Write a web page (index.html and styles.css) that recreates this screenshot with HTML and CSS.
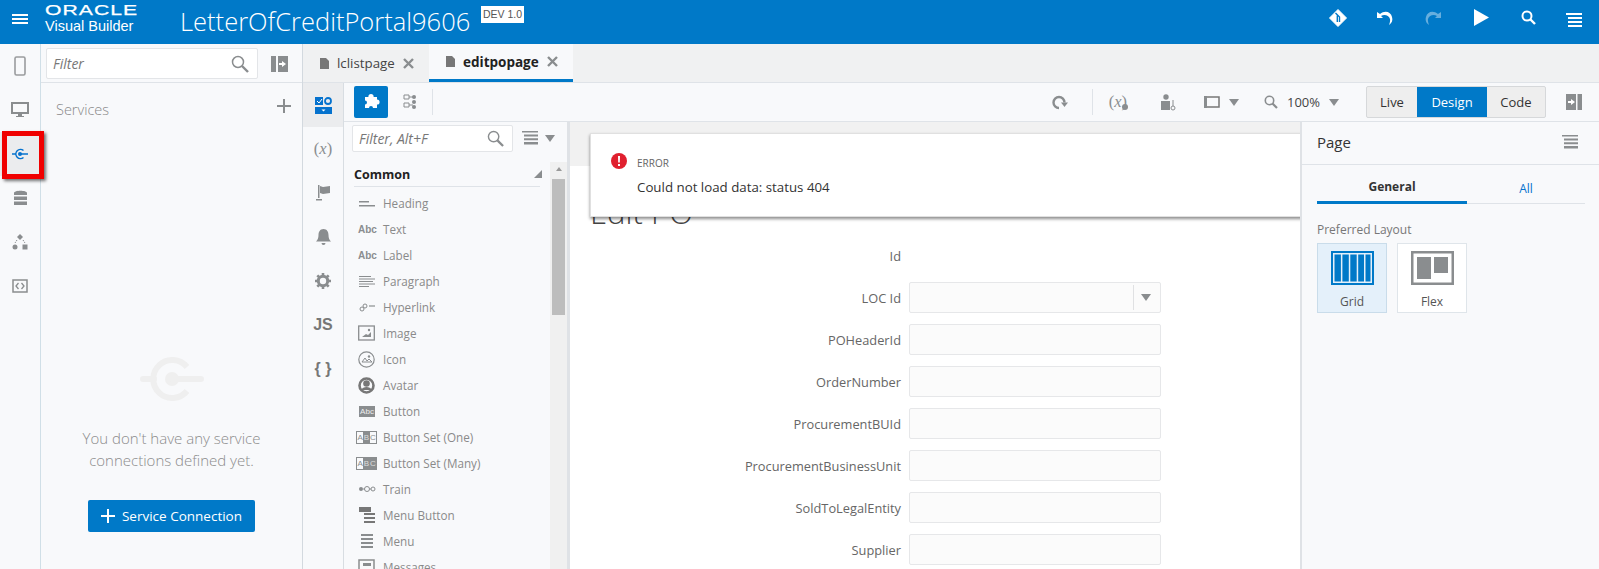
FILE: index.html
```html
<!DOCTYPE html>
<html lang="en">
<head>
<meta charset="utf-8">
<title>Visual Builder</title>
<link rel="stylesheet" href="styles.css">
</head>
<body>
<header class="topbar">
  <svg class="burger" width="16" height="10" viewBox="0 0 16 10"><path d="M0 0h16v2H0zM0 4h16v2H0zM0 8h16v2H0z" fill="#fff"/></svg>
  <div class="brand"><span class="oracle">ORACLE</span><span class="vb">Visual Builder</span></div>
  <div class="apptitle">LetterOfCreditPortal9606</div>
  <div class="badge">DEV 1.0</div>
  <div class="top-actions">
    <svg width="18" height="18" viewBox="0 0 18 18"><path d="M9 .5l8.500 8.500L9 17.500.5 9z" fill="#fff" stroke="#fff" stroke-linejoin="round"/><path d="M6.500 4l4 4v5M8.300 6.500V13" stroke="#0079c8" stroke-width="1.400" fill="none"/></svg>
    <svg width="18" height="18" viewBox="0 0 18 18"><path d="M1 3v6h6L5 7c3-2 8-1 9 3 .4 2-.2 4-1 6 3-2 4-5 3-8C15 3 9 1 4 5z" fill="#fff"/></svg>
    <svg class="faded" width="18" height="18" viewBox="0 0 18 18"><path d="M17 3v6h-6l2-2c-3-2-8-1-9 3-.4 2 .2 4 1 6-3-2-4-5-3-8C3 3 9 1 14 5z" fill="#fff"/></svg>
    <svg width="15" height="17" viewBox="0 0 15 17"><path d="M0 0l15 8.500L0 17z" fill="#fff"/></svg>
    <svg width="15" height="15" viewBox="0 0 15 15"><circle cx="6" cy="6" r="4.500" stroke="#fff" stroke-width="2" fill="none"/><path d="M9.500 9.500l4.500 4.500" stroke="#fff" stroke-width="2.400"/></svg>
    <svg width="16" height="14" viewBox="0 0 16 14"><path d="M0 0h16v2H0zM2 4h14v2H2zM2 8h14v2H2zM2 12h14v2H2z" fill="#fff"/></svg>
  </div>
</header>

<div class="shell">
  <nav class="rail">
    <div class="rail-item"><svg width="14" height="20" viewBox="0 0 14 20"><rect x="2" y="1" width="10" height="18" rx="1.500" fill="none" stroke="#9a9c9e" stroke-width="1.600"/></svg></div>
    <div class="rail-item"><svg width="18" height="16" viewBox="0 0 18 16"><path d="M1 1h16v10H1z" fill="none" stroke="#8a8d8f" stroke-width="2"/><path d="M7 12h4v2h2v1H5v-1h2z" fill="#8a8d8f"/></svg></div>
    <div class="rail-item active">
      <svg width="16" height="12" viewBox="0 0 16 12"><path d="M11.500 2.500A4.600 4.600 0 1 0 11.500 9.500" fill="none" stroke="#0572ce" stroke-width="1.500"/><circle cx="8" cy="6" r="2" fill="#0572ce"/><path d="M0 6h4M8 6h8" stroke="#0572ce" stroke-width="1.300"/></svg>
      <div class="callout"></div>
    </div>
    <div class="rail-item"><svg width="15" height="16" viewBox="0 0 15 16"><path d="M1 3c0-3 13-3 13 0v2H1zM1 6.500h13v3.500H1zM1 11.500h13V15H1z" fill="#8a8d8f"/></svg></div>
    <div class="rail-item"><svg width="16" height="16" viewBox="0 0 16 16"><path d="M8 0l3 3-3 3-3-3z" fill="#8a8d8f"/><circle cx="3" cy="13" r="2.500" fill="#8a8d8f"/><rect x="10.500" y="10.500" width="5" height="5" fill="#8a8d8f"/><path d="M5 6l-2 3M11 6l2 3" stroke="#8a8d8f" stroke-dasharray="1.500 1"/></svg></div>
    <div class="rail-item"><svg width="16" height="14" viewBox="0 0 16 14"><rect x="1" y="1" width="14" height="12" fill="none" stroke="#8a8d8f" stroke-width="1.500"/><path d="M6.500 4L4 7l2.500 3M9.500 4L12 7l-2.500 3" fill="none" stroke="#8a8d8f" stroke-width="1.300"/></svg></div>
  </nav>

  <aside class="services">
    <div class="svc-top">
      <div class="filter filter-wide"><span>Filter</span><svg class="lens" width="18" height="18" viewBox="0 0 18 18"><circle cx="7" cy="7" r="5.500" fill="none" stroke="#8a8d8f" stroke-width="1.500"/><path d="M11 11l6 6" stroke="#8a8d8f" stroke-width="2.400"/></svg></div>
      <svg width="17" height="16" viewBox="0 0 17 16"><path d="M0 0h5v16H0zM7 0h10v16H7z" fill="#8a8d8f"/><path d="M15 8l-4-3v2H8v2h3v2z" fill="#fff"/></svg>
    </div>
    <div class="svc-head"><span>Services</span><svg class="svc-plus" width="14" height="14" viewBox="0 0 14 14"><path d="M6 0h2v6h6v2H8v6H6V8H0V6h6z" fill="#8a8d8f"/></svg></div>
    <div class="svc-empty">
      <svg class="svc-ghost" width="64" height="44" viewBox="0 0 64 44"><path d="M47 10A19 19 0 1 0 47 34" fill="none" stroke="#efefef" stroke-width="6"/><circle cx="32" cy="22" r="7" fill="#efefef"/><path d="M3 22h11M32 22h29" stroke="#efefef" stroke-width="6" stroke-linecap="round"/></svg>
      <p class="svc-msg">You don't have any service<br>connections defined yet.</p>
      <button class="primary"><svg width="14" height="14" viewBox="0 0 14 14"><path d="M6 0h2v6h6v2H8v6H6V8H0V6h6z" fill="#fff"/></svg>Service Connection</button>
    </div>
  </aside>

  <main class="workspace">
    <div class="tabs">
      <div class="tab"><svg width="9" height="11" viewBox="0 0 9 11"><path d="M0 0h6l3 3v8H0z" fill="#777"/></svg><span>lclistpage</span><svg class="x" width="11" height="11" viewBox="0 0 11 11"><path d="M1 1l9 9M10 1l-9 9" stroke="#8a8d8f" stroke-width="2.400"/></svg></div>
      <div class="tab tab-on"><svg width="9" height="11" viewBox="0 0 9 11"><path d="M0 0h6l3 3v8H0z" fill="#777"/></svg><span>editpopage</span><svg class="x" width="11" height="11" viewBox="0 0 11 11"><path d="M1 1l9 9M10 1l-9 9" stroke="#8a8d8f" stroke-width="2.400"/></svg></div>
    </div>
    <div class="editor">
      <div class="iconrail">
        <div class="ir-item ir-on"><svg width="17" height="17" viewBox="0 0 17 17"><path d="M0 0h8v8H0zM0 10h17v7H0z" fill="#0572ce"/><circle cx="13" cy="4" r="3" fill="none" stroke="#0572ce" stroke-width="1.800"/><path d="M2 4l2 2 3-4" stroke="#fff" fill="none"/><path d="M6.500 12.500h4l-2 2z" fill="#fff"/></svg></div>
        <div class="ir-item xvar">(<i>x</i>)</div>
        <div class="ir-item"><svg width="14" height="16" viewBox="0 0 14 16"><path d="M2 0h1.500v13H2zM4 1l3 1 7-1v7l-7 1-3-1zM0 14h6v1.500H0z" fill="#8a8d8f"/></svg></div>
        <div class="ir-item"><svg width="15" height="16" viewBox="0 0 15 16"><path d="M7.500 0c3.500 0 5 3 5 6 0 3 .8 5 2.500 6.500H0C1.700 11 2.500 9 2.500 6c0-3 1.500-6 5-6zM5.500 14h4a2 2 0 0 1-4 0z" fill="#8a8d8f"/></svg></div>
        <div class="ir-item"><svg width="16" height="16" viewBox="0 0 16 16"><circle cx="8" cy="8" r="4.700" fill="none" stroke="#8a8d8f" stroke-width="3"/><path d="M8 0v3M8 13v3M0 8h3M13 8h3M2.300 2.300l2.200 2.200M11.500 11.500l2.200 2.200M13.700 2.300l-2.200 2.200M4.500 11.500l-2.200 2.200" stroke="#8a8d8f" stroke-width="2.600"/></svg></div>
        <div class="ir-item jsmark">JS</div>
        <div class="ir-item braces">{ }</div>
      </div>
      <div class="design">
        <div class="toolbar">
          <div class="tb-left">
            <div class="puzzle"><svg width="17" height="16" viewBox="0 0 17 16"><rect x="2" y="3" width="12" height="11" fill="#fff"/><circle cx="8" cy="2.600" r="2.600" fill="#fff"/><circle cx="14" cy="8" r="2.600" fill="#fff"/><circle cx="2" cy="8.500" r="2" fill="#0079c8"/><circle cx="8" cy="14" r="2" fill="#0079c8"/></svg></div>
            <svg class="struct" width="14" height="16" viewBox="0 0 14 16"><path d="M1 1h5v4H1zM1 9h5v4H1z" fill="none" stroke="#8a8d8f"/><circle cx="11" cy="3" r="2" fill="#8a8d8f"/><circle cx="11" cy="8" r="2" fill="#8a8d8f"/><circle cx="11" cy="13" r="2" fill="#8a8d8f"/><path d="M6 3h4M6 11h4" stroke="#8a8d8f"/></svg>
            <span class="vsep"></span>
          </div>
          <div class="tb-right">
            <svg class="t-refresh" width="17" height="15" viewBox="0 0 17 15"><path d="M8 13A5.500 5.500 0 1 1 13.500 7.500" fill="none" stroke="#8a8d8f" stroke-width="2.400"/><path d="M10 7.500h7L13.500 12z" fill="#8a8d8f"/></svg>
            <span class="vsep t-sep"></span>
            <span class="xvar t-x">(<i>x</i>)<i class="x-dot"></i></span>
            <svg class="t-person" width="15" height="17" viewBox="0 0 15 17"><circle cx="5" cy="3" r="2.700" fill="#8a8d8f"/><path d="M0 7h9v9H0z" fill="#8a8d8f"/><circle cx="12" cy="14" r="2" fill="none" stroke="#8a8d8f"/><path d="M12 6v6" stroke="#8a8d8f"/></svg>
            <svg class="t-frame" width="16" height="12" viewBox="0 0 16 12"><path d="M1 1h14v10H1z" fill="none" stroke="#777" stroke-width="1.500"/><path d="M0 0h3v12H0z" fill="#8a8d8f"/></svg>
            <span class="caret t-car1"></span>
            <svg class="t-lens" width="14" height="14" viewBox="0 0 14 14"><circle cx="5.500" cy="5.500" r="4.200" fill="none" stroke="#8a8d8f" stroke-width="1.600"/><path d="M8.500 8.500L13 13" stroke="#8a8d8f" stroke-width="2.200"/></svg>
            <span class="zoomtxt">100%</span>
            <span class="caret t-car2"></span>
            <div class="seg"><span class="s-live">Live</span><span class="s-design">Design</span><span class="s-code">Code</span></div>
            <svg class="t-coll" width="16" height="16" viewBox="0 0 16 16"><path d="M0 0h10v16H0zM11.500 0H16v16h-4.500z" fill="#8a8d8f"/><path d="M9 8L5 5v2H2v2h3v2z" fill="#fff"/></svg>
          </div>
        </div>
        <div class="design-body">
          <section class="palette">
            <div class="pal-top">
              <div class="filter filter-pal"><span>Filter, Alt+F</span><svg class="lens" width="17" height="17" viewBox="0 0 18 18"><circle cx="7" cy="7" r="5.500" fill="none" stroke="#8a8d8f" stroke-width="1.500"/><path d="M11 11l6 6" stroke="#8a8d8f" stroke-width="2.400"/></svg></div>
              <svg width="16" height="15" viewBox="0 0 16 15"><path d="M0 0h16v1.500H0zM2 3.400h14v2H2zM2 7.200h14v2H2zM2 11h14v2.500H2z" fill="#8a8d8f"/></svg>
              <span class="caret"></span>
            </div>
            <div class="pal-body">
              <div class="pal-list">
                <div class="pal-cat"><span>Common</span><i class="cat-tri"></i></div>
                <div class="pi"><svg class="pic" width="18" height="16" viewBox="0 0 18 16"><path d="M1 6h10v1.500H1zM1 10h16v1.500H1z" fill="#8a8d8f"/></svg>Heading</div>
                <div class="pi"><span class="pic abc">Abc</span>Text</div>
                <div class="pi"><span class="pic abc">Abc</span>Label</div>
                <div class="pi"><svg class="pic" width="18" height="16" viewBox="0 0 18 16"><path d="M1 3h12v1H1zM1 5.500h16v1H1zM1 8h14v1H1zM1 10.500h16v1H1zM1 13h10v1H1z" fill="#8a8d8f"/></svg>Paragraph</div>
                <div class="pi"><svg class="pic" width="18" height="16" viewBox="0 0 18 16"><circle cx="4" cy="10" r="2" fill="none" stroke="#8a8d8f"/><circle cx="7" cy="7" r="2" fill="none" stroke="#8a8d8f"/><path d="M11 7h6" stroke="#8a8d8f" stroke-width="1.200"/></svg>Hyperlink</div>
                <div class="pi"><svg class="pic" width="18" height="16" viewBox="0 0 18 16"><rect x=".7" y="1" width="15.600" height="14" fill="none" stroke="#8a8d8f" stroke-width="1.300"/><path d="M4 12l4-3 2 1 3-3v5z" fill="#8a8d8f"/><circle cx="11" cy="5" r="1.200" fill="#8a8d8f"/></svg>Image</div>
                <div class="pi"><svg class="pic" width="18" height="17" viewBox="0 0 18 17"><circle cx="8.500" cy="8.500" r="7.700" fill="none" stroke="#8a8d8f" stroke-width="1.200"/><path d="M4 11l3-4 2 3 2-2 3 3z" fill="none" stroke="#8a8d8f"/><circle cx="11" cy="5.500" r="1.200" fill="#8a8d8f"/></svg>Icon</div>
                <div class="pi"><svg class="pic" width="18" height="17" viewBox="0 0 18 17"><circle cx="8.500" cy="8.500" r="7" fill="none" stroke="#777" stroke-width="2.600"/><circle cx="8.500" cy="6.500" r="3.300" fill="#777"/><path d="M3 13c2-4 9-4 11 0z" fill="#777"/></svg>Avatar</div>
                <div class="pi"><span class="pic abtn">Abc</span>Button</div>
                <div class="pi"><span class="pic abcset"><b>A</b><b class="on">B</b><b>C</b></span>Button Set (One)</div>
                <div class="pi"><span class="pic abcset"><b>A</b><b class="on">B</b><b class="on">C</b></span>Button Set (Many)</div>
                <div class="pi"><svg class="pic" width="18" height="16" viewBox="0 0 18 16"><circle cx="3" cy="8" r="2" fill="#8a8d8f"/><circle cx="9" cy="8" r="2.500" fill="none" stroke="#8a8d8f"/><circle cx="15" cy="8" r="2" fill="none" stroke="#8a8d8f"/><path d="M5 8h2M11.500 8H13" stroke="#8a8d8f"/></svg>Train</div>
                <div class="pi"><svg class="pic" width="18" height="17" viewBox="0 0 18 17"><path d="M1 0h12v5H1zM6 6h11v2H6zM6 10h11v2H6zM6 14h11v2H6z" fill="#777"/></svg>Menu Button</div>
                <div class="pi"><svg class="pic" width="18" height="16" viewBox="0 0 18 16"><path d="M3 1h12v2H3zM3 5h12v2H3zM3 9h12v2H3zM3 13h12v2H3z" fill="#8a8d8f"/></svg>Menu</div>
                <div class="pi"><svg class="pic" width="18" height="16" viewBox="0 0 18 16"><path d="M1 1h15v14H1z" fill="none" stroke="#8a8d8f" stroke-width="1.500"/><path d="M5 4h8v3H5z" fill="#8a8d8f"/></svg>Messages</div>
              </div>
              <div class="scroll"><i class="sc-up"></i><i class="sc-thumb"></i></div>
            </div>
          </section>

          <section class="canvas">
            <div class="canvas-strip"></div>
            <h1 class="pagehead">Edit PO</h1>
            <div class="form">
              <label>Id</label><div></div>
              <label>LOC Id</label><div class="inp sel"><i class="sel-sep"></i><span class="caret"></span></div>
              <label>POHeaderId</label><div class="inp"></div>
              <label>OrderNumber</label><div class="inp"></div>
              <label>ProcurementBUId</label><div class="inp"></div>
              <label>ProcurementBusinessUnit</label><div class="inp"></div>
              <label>SoldToLegalEntity</label><div class="inp"></div>
              <label>Supplier</label><div class="inp"></div>
            </div>
            <div class="toast">
              <svg class="toast-ic" width="16" height="16" viewBox="0 0 16 16"><circle cx="8" cy="8" r="8" fill="#e0202f"/><path d="M7 3h2l-.2 6.500H7.200zM7 11h2v2H7z" fill="#fff"/></svg>
              <div class="toast-txt"><div class="toast-t">ERROR</div><div class="toast-m">Could not load data: status 404</div></div>
            </div>
          </section>

          <aside class="props">
            <div class="props-head"><span>Page</span><svg width="16" height="15" viewBox="0 0 16 15"><path d="M0 0h16v1.500H0zM2 3.400h14v2H2zM2 7.200h14v2H2zM2 11h14v2.500H2z" fill="#8a8d8f"/></svg></div>
            <div class="props-body">
              <div class="ptabs"><span class="pt-on">General</span><span class="pt">All</span></div>
              <div class="pl-label">Preferred Layout</div>
              <div class="cards">
                <div class="card card-on"><svg width="43" height="34" viewBox="0 0 43 34"><path d="M0 0h43v34H0z" fill="#0079c8"/><path d="M2 2h39v30H2z" fill="#e4f0fa"/><path d="M3.500 3.500h6.400v27H3.500zM11.400 3.500h6.400v27h-6.400zM19.300 3.500h6.400v27h-6.400zM27.200 3.500h5.800v27h-5.800zM34.500 3.500h5v27h-5z" fill="#0079c8"/></svg><span>Grid</span></div>
                <div class="card"><svg width="43" height="34" viewBox="0 0 43 34"><path d="M0 0h43v34H0z" fill="#8a8d8f"/><path d="M2.500 2.500h38v29h-38z" fill="#fff"/><path d="M6 6h14v22H6zM23 6h14v16H23z" fill="#8a8d8f"/></svg><span>Flex</span></div>
              </div>
            </div>
          </aside>
        </div>
      </div>
    </div>
  </main>
</div>
</body>
</html>
```

FILE: styles.css
```css
* { box-sizing: border-box; }
html, body { margin: 0; height: 569px; overflow: hidden; }
body { font-family: "Open Sans", "Liberation Sans", sans-serif; font-size: 12.5px; color: #333; background: #f8f9fb; }
svg { display: block; flex: none; }

.topbar { height: 44px; background: #0079c8; display: flex; align-items: center; color: #fff; }
.burger { margin-left: 12px; margin-bottom: 7px; }
.brand { align-self: flex-start; margin-top: 3px; margin-left: 17px; display: flex; flex-direction: column; width: 135px; font-family: "Liberation Sans", sans-serif; }
.oracle { font-size: 14.5px; line-height: 15px; font-weight: 400; letter-spacing: .7px; transform: scaleX(1.46); transform-origin: left; -webkit-text-stroke: .25px #fff; }
.vb { font-size: 14.500px; line-height: 16px; margin-top: 0; }
.apptitle { font-size: 25.5px; font-weight: 300; line-height: 40px; margin-bottom: 2px; width: 301px; }
.badge { align-self: flex-start; margin-top: 6px; background: #fff; color: #555; font-size: 10.500px; line-height: 17px; height: 17px; width: 43px; text-align: center; font-family: "Liberation Sans", sans-serif; }
.top-actions { margin-left: auto; display: flex; align-items: center; padding-bottom: 9px; }
.top-actions svg { margin-right: 30px; }
.top-actions svg:nth-child(1) { margin-right: 29px; }
.top-actions svg:nth-child(3) { margin-right: 32px; }
.top-actions svg:nth-child(4) { margin-right: 32px; }
.top-actions svg:last-child { margin-right: 17px; margin-top: 4px; }
.faded { opacity: .4; }

.shell { display: flex; height: 525px; }
.rail { width: 41px; border-right: 1px solid #d0dfe7; flex: none; }
.rail-item { height: 44px; display: flex; align-items: center; justify-content: center; position: relative; }
.rail-item.active { background: #ebecee; }
.callout { position: absolute; left: 2px; top: -1px; width: 42px; height: 48px; border: 5px solid #f00000; box-shadow: 2px 2px 3px rgba(0,0,0,.55); }

.services { width: 262px; flex: none; border-right: 1px solid #d3d9df; display: flex; flex-direction: column; }
.svc-top { height: 39px; display: flex; align-items: center; gap: 13px; padding: 1px 0 0 5px; border-bottom: 1px solid #dfe3e8; }
.filter { background: #fff; border: 1px solid #e3e5e8; border-radius: 2px; display: flex; align-items: center; justify-content: space-between; padding: 0 8px 0 6px; font-style: italic; color: #777; font-size: 14px; }
.filter-wide { width: 212px; height: 31px; }
.filter-pal { width: 161px; height: 27px; }
.svc-head { height: 52px; display: flex; align-items: center; justify-content: space-between; padding: 0 11px 0 15px; font-size: 14.500px; font-weight: 300; color: #888; }
.svc-plus { margin-bottom: 6px; }
.svc-empty { display: flex; flex-direction: column; align-items: center; padding-top: 222px; }
.svc-msg { margin: 27px 0 0; text-align: center; font-size: 15px; line-height: 21.500px; font-weight: 300; color: #8c8c8c; }
.primary { margin-top: 29px; height: 32px; width: 167px; background: #0079c8; border: 0; border-radius: 2px; color: #fff; font: 13.500px "Open Sans", sans-serif; display: flex; align-items: center; justify-content: center; gap: 7px; }

.workspace { flex: 1; min-width: 0; display: flex; flex-direction: column; }
.tabs { height: 39px; background: #f0f1f2; display: flex; border-bottom: 1px solid #dfe3e8; padding-left: 17px; flex: none; }
.tab { height: 38px; display: flex; align-items: center; gap: 8px; font-size: 13.300px; color: #444; }
.tab:first-child { width: 109px; }
.tab-on { width: 144px; background: #f8f9fb; padding-left: 17px; border-bottom: 3px solid #0079c8; font-weight: 700; color: #222; font-size: 13.500px; }

.editor { flex: 1; display: flex; min-height: 0; }
.iconrail { width: 41px; flex: none; border-right: 1px solid #d8dde2; }
.ir-item { height: 44px; display: flex; align-items: center; justify-content: center; }
.ir-on { background: #ebecee; }
.xvar { font-family: "Liberation Serif", serif; font-size: 16.500px; color: #8a8d8f; }
.jsmark { font-family: "Liberation Sans", sans-serif; font-weight: 700; font-size: 16px; color: #777; }
.braces { font-family: "Liberation Sans", sans-serif; font-weight: 700; font-size: 16px; color: #777; }

.design { flex: 1; min-width: 0; display: flex; flex-direction: column; }
.toolbar { height: 39px; flex: none; display: flex; justify-content: space-between; align-items: center; border-bottom: 1px solid #dfe3e8; }
.tb-left { display: flex; align-items: center; padding-left: 10px; }
.puzzle { width: 34px; height: 32px; background: #0079c8; border-radius: 2px; display: flex; align-items: center; justify-content: center; }
.struct { margin-left: 15px; }
.vsep { width: 1px; height: 26px; background: #dfe3e8; margin-left: 15px; }
.tb-right { display: flex; align-items: center; padding-right: 17px; }
.t-sep { margin-left: 24px; }
.t-x { margin-left: 16px; position: relative; }
.x-dot { position: absolute; right: -1px; bottom: 2px; width: 6px; height: 6px; border-radius: 50%; background: #8a8d8f; }
.t-person { margin-left: 34px; }
.t-frame { margin-left: 28px; }
.t-car1 { margin-left: 9px; }
.t-lens { margin-left: 25px; }
.zoomtxt { margin-left: 9px; font-size: 13px; color: #444; }
.t-car2 { margin-left: 9px; }
.seg { margin-left: 27px; display: flex; height: 32px; border: 1px solid #d6d8da; border-radius: 2px; background: #eeeeee; font-size: 13px; color: #333; }
.seg span { display: flex; align-items: center; justify-content: center; }
.s-live { width: 50px; }
.s-design { width: 70px; background: #0079c8; color: #fff; }
.s-code { width: 58px; }
.t-coll { margin-left: 20px; }
.caret { display: block; flex: none; width: 0; height: 0; border-left: 5px solid transparent; border-right: 5px solid transparent; border-top: 7px solid #8a8d8f; }

.design-body { flex: 1; display: flex; min-height: 0; }
.palette { width: 226px; flex: none; border-right: 3px solid #dfe2e6; display: flex; flex-direction: column; }
.pal-top { height: 40px; display: flex; align-items: center; padding: 0 0 7px 8px; flex: none; }
.pal-top > svg { margin-left: 9px; }
.pal-top .caret { margin-left: 7px; }
.pal-body { flex: 1; display: flex; min-height: 0; }
.pal-list { width: 206px; flex: none; overflow: hidden; }
.pal-cat { margin: 0 10px 3px; height: 25px; border-bottom: 1px solid #dfe3e8; display: flex; justify-content: space-between; align-items: center; font-weight: 700; font-size: 12.500px; color: #222; }
.cat-tri { width: 0; height: 0; border-left: 8px solid transparent; border-bottom: 8px solid #8a8d8f; margin-right: -2px; }
.pi { height: 26px; display: flex; align-items: center; padding-left: 14px; font-size: 11.700px; color: #8a8a8a; }
.pic { width: 18px; flex: none; margin-right: 7px; }
.abc { font: 700 10px "Liberation Sans", sans-serif; color: #8a8d8f; }
.abtn { height: 11px; background: #8a8d8f; color: #eee; font: 8px/11px "Liberation Sans", sans-serif; text-align: center; width: 16px; margin-left: 1px; margin-right: 8px; }
.abcset { display: flex; width: 21px; height: 13px; margin-left: -2px; margin-right: 6px; border: 1px solid #8a8d8f; }
.abcset b { flex: 1; font: 8px/11px "Liberation Sans", sans-serif; text-align: center; color: #8a8d8f; }
.abcset .on { background: #8a8d8f; color: #ddd; }
.scroll { width: 17px; background: #f0f0f0; padding: 5px 2px 0; display: flex; flex-direction: column; align-items: center; }
.sc-up { width: 0; height: 0; border-left: 3.500px solid transparent; border-right: 3.500px solid transparent; border-bottom: 4px solid #999; }
.sc-thumb { width: 13px; height: 136px; margin-top: 8px; background: #bdbdbd; }

.canvas { width: 730px; flex: none; background: #fff; position: relative; overflow: hidden; }
.canvas-strip { height: 44px; background: #f1f1f1; }
.pagehead { margin: 29px 0 0 20px; font-size: 31px; line-height: 34px; font-weight: 300; color: #444; height: 34px; }
.form { margin-top: 11px; display: grid; grid-template-columns: 331px 252px; column-gap: 8px; grid-auto-rows: 31px; row-gap: 11px; align-items: center; }
.form label { text-align: right; font-size: 12.800px; color: #666; }
.inp { height: 31px; background: #fbfbfb; border: 1px solid #e6e7e9; border-radius: 2px; }
.sel { display: flex; align-items: center; justify-content: flex-end; padding-right: 9px; gap: 7px; }
.sel-sep { width: 1px; height: 25px; background: #e0e1e3; }
.toast { position: absolute; left: 20px; top: 11px; width: 760px; height: 84px; background: #fff; border: 1px solid #e0e0e0; box-shadow: 0 2px 3px rgba(0,0,0,.45); display: flex; padding: 19px 0 0 20px; }
.toast-ic { margin-right: 10px; }
.toast-t { font-size: 10px; line-height: 20px; color: #666; }
.toast-m { font-size: 13.300px; line-height: 20px; margin-top: 4px; color: #333; }

.props { flex: 1; min-width: 0; border-left: 2px solid #dfe2e6; display: flex; flex-direction: column; }
.props-head { height: 43px; flex: none; border-bottom: 1px solid #dfe3e8; display: flex; align-items: center; justify-content: space-between; padding: 0 21px 2px 15px; font-size: 15px; color: #333; }
.props-body { padding: 0 14px 0 15px; }
.ptabs { display: flex; height: 39px; align-items: center; border-bottom: 1px solid #dfe3e8; font-size: 12px; }
.ptabs span { display: flex; align-items: center; justify-content: center; height: 39px; padding-top: 8px; }
.pt-on { width: 150px; font-weight: 700; color: #333; border-bottom: 3px solid #0079c8; }
.pt { flex: 1; color: #0572ce; }
.pl-label { margin-top: 17px; font-size: 12px; line-height: 18px; color: #777; }
.cards { display: flex; gap: 10px; margin-top: 4px; }
.card { width: 70px; height: 70px; border: 1px solid #dfe5ea; background: #fff; display: flex; flex-direction: column; align-items: center; padding-top: 7px; font-size: 12px; color: #555; gap: 8px; }
.card-on { background: #e4f0fa; border-color: #c9dcea; }
```
